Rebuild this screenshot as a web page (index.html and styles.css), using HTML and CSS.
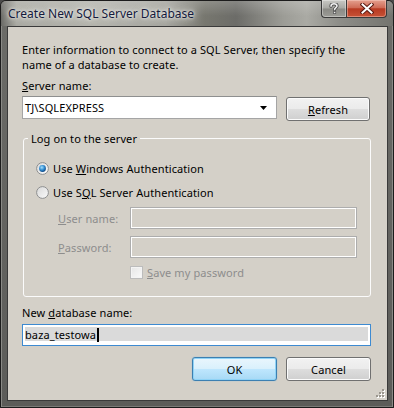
FILE: index.html
```html
<!DOCTYPE html>
<html>
<head>
<meta charset="utf-8">
<title>Create New SQL Server Database</title>
<link rel="stylesheet" href="styles.css">
</head>
<body>
<div class="window">
  <div class="titlebar">
    <span class="title">Create New SQL Server Database</span>
    <div class="caption-buttons">
      <div class="cap help">
        <svg width="10" height="11" viewBox="0 0 10 11"><path d="M2 3.2 C2 1.4 3.4 0.8 5 0.8 C6.8 0.8 8 1.7 8 3.1 C8 4.6 5.6 4.9 5.6 6.6" fill="none" stroke="#4a4a4a" stroke-width="3.2" stroke-linecap="round"/><path d="M2 3.2 C2 1.4 3.4 0.8 5 0.8 C6.8 0.8 8 1.7 8 3.1 C8 4.6 5.6 4.9 5.6 6.6" fill="none" stroke="#f0f0f0" stroke-width="1.6" stroke-linecap="round"/><rect x="4.1" y="8.2" width="3" height="2.6" fill="#4a4a4a"/><rect x="4.8" y="8.8" width="1.6" height="1.4" fill="#f0f0f0"/></svg>
      </div>
      <div class="cap close">
        <svg width="14" height="11" viewBox="0 0 14 11"><path d="M2.5 1.5 L11.5 9.5 M11.5 1.5 L2.5 9.5" stroke="#5a1a12" stroke-width="4" stroke-linecap="square"/><path d="M2.5 1.5 L11.5 9.5 M11.5 1.5 L2.5 9.5" stroke="#ffffff" stroke-width="2" stroke-linecap="square"/></svg>
      </div>
    </div>
  </div>
  <div class="client">
    <p class="intro">Enter information to connect to a SQL Server, then specify the<br>name of a database to create.</p>
    <div class="label label-server"><u>S</u>erver name:</div>
    <div class="server-row">
      <div class="combo">
        <span class="value">TJ\SQLEXPRESS</span>
        <svg class="arrow" width="7" height="4" viewBox="0 0 7 4"><path d="M0 0 H7 L3.5 4 Z" fill="#000"/></svg>
      </div>
      <div class="btn btn-refresh"><u>R</u>efresh</div>
    </div>
    <fieldset class="group">
      <legend>Log on to the server</legend>
      <div class="group-body">
        <div class="radio-row">
          <svg class="radio" width="13" height="13" viewBox="0 0 13 13">
            <defs>
              <linearGradient id="rbg1" x1="0" y1="0" x2="1" y2="1"><stop offset="0" stop-color="#d8d8d8"/><stop offset="1" stop-color="#ffffff"/></linearGradient>
              <radialGradient id="rdot" cx="0.4" cy="0.35" r="0.7"><stop offset="0" stop-color="#a6e0fb"/><stop offset="0.55" stop-color="#2f8ad0"/><stop offset="1" stop-color="#0b3f78"/></radialGradient>
            </defs>
            <circle cx="6.5" cy="6.5" r="5.9" fill="url(#rbg1)" stroke="#8d8e8f" stroke-width="1"/>
            <circle cx="6.5" cy="6.5" r="3.4" fill="url(#rdot)"/>
          </svg>
          <span>Use <u>W</u>indows Authentication</span>
        </div>
        <div class="radio-row">
          <svg class="radio" width="13" height="13" viewBox="0 0 13 13">
            <defs>
              <linearGradient id="rbg2" x1="0" y1="0" x2="1" y2="1"><stop offset="0" stop-color="#d8d8d8"/><stop offset="1" stop-color="#fbfbfb"/></linearGradient>
            </defs>
            <circle cx="6.5" cy="6.5" r="5.9" fill="url(#rbg2)" stroke="#8d8e8f" stroke-width="1"/>
          </svg>
          <span>Use S<u>Q</u>L Server Authentication</span>
        </div>
        <div class="fields">
          <span class="field-label disabled"><u>U</u>ser name:</span>
          <div class="textbox textbox-disabled"></div>
          <span class="field-label disabled"><u>P</u>assword:</span>
          <div class="textbox textbox-disabled"></div>
          <span></span>
          <div class="check-row">
            <span class="checkbox"></span>
            <span class="disabled"><u>S</u>ave my password</span>
          </div>
        </div>
      </div>
    </fieldset>
    <div class="label label-db">New <u>d</u>atabase name:</div>
    <div class="textbox textbox-focused"><span>baza_testowa</span><span class="caret"></span></div>
    <div class="buttons">
      <div class="btn btn-default">OK</div>
      <div class="btn">Cancel</div>
    </div>
    <svg class="grip" width="9" height="9" viewBox="0 0 9 9">
      <g fill="#ffffff"><rect x="7" y="1" width="2" height="2"/><rect x="4" y="4" width="2" height="2"/><rect x="7" y="4" width="2" height="2"/><rect x="1" y="7" width="2" height="2"/><rect x="4" y="7" width="2" height="2"/><rect x="7" y="7" width="2" height="2"/></g>
      <g fill="#9a968e"><rect x="6" y="0" width="2" height="2"/><rect x="3" y="3" width="2" height="2"/><rect x="6" y="3" width="2" height="2"/><rect x="0" y="6" width="2" height="2"/><rect x="3" y="6" width="2" height="2"/><rect x="6" y="6" width="2" height="2"/></g>
    </svg>
  </div>
</div>
</body>
</html>
```

FILE: styles.css
```css
* { box-sizing: border-box; }

html, body {
  margin: 0;
  padding: 0;
}

body {
  width: 394px;
  height: 408px;
  overflow: hidden;
  background: #4a4a4a;
  font-family: "Noto Sans", "Open Sans", sans-serif;
  font-size: 11px;
  letter-spacing: 0.1px;
  color: #000;
}

.window {
  width: 394px;
  height: 408px;
  border: 1px solid #1c1c1c;
  border-radius: 6px 6px 0 0;
  padding: 0 5px 6px 6px;
  display: flex;
  flex-direction: column;
  background: linear-gradient(to bottom, #6c6c68 0%, #5c5c59 100%);
  box-shadow: inset 1px 0 0 #8a8a86, inset -1px 0 0 #8a8a86, inset 0 -1px 0 #7a7a76;
}

.titlebar {
  height: 25px;
  margin: 0 -5px 0 -6px;
  padding: 0 6px 0 7px;
  display: flex;
  justify-content: space-between;
  align-items: flex-start;
  border-radius: 5px 5px 0 0;
  background:
    linear-gradient(to bottom, rgba(255,255,255,0.18) 0%, rgba(255,255,255,0) 60%),
    linear-gradient(to right, #6a6a66 0%, #a9a9a2 4%, #b3b3ac 25%, #a4a49e 42%, #77776f 52%, #6c6c68 60%, #9c9c96 72%, #aaaaa4 78%, #8e8e89 86%, #74746f 100%);
}

.title {
  line-height: 25px;
  font-size: 12px;
  letter-spacing: 0;
  color: #141a3c;
  text-shadow: 0 0 6px #e8e8e2, 0 0 10px #e0e0da, 0 0 3px #ffffff;
}

.caption-buttons {
  display: flex;
  height: 18px;
  margin-top: -1px;
}

.cap {
  height: 18px;
  display: flex;
  align-items: center;
  justify-content: center;
  border: 1px solid #3a3a3a;
  border-top: none;
}

.help {
  width: 25px;
  border-radius: 0 0 0 4px;
  border-right: none;
  background: linear-gradient(to bottom, #c8c8c4 0%, #a8a8a3 48%, #8a8a85 52%, #9c9c97 100%);
  box-shadow: inset 0 0 0 1px rgba(255,255,255,0.35);
}

.close {
  width: 41px;
  border-radius: 0 0 4px 0;
  background: linear-gradient(to bottom, #e4a08f 0%, #cf6c57 45%, #b83a22 52%, #c75236 100%);
  box-shadow: inset 0 0 0 1px rgba(255,220,210,0.4);
}

.client {
  position: relative;
  flex: 1;
  border: 1px solid #3a3a3a;
  background: #d4d0c8;
  padding: 15px 16px 17px 14px;
  display: flex;
  flex-direction: column;
}

.intro {
  margin: 0;
  line-height: 15px;
}

.label {
  line-height: 15px;
}

.label-server {
  margin-top: 6px;
}

.server-row {
  margin-top: 3px;
  display: flex;
  align-items: flex-start;
  gap: 9px;
}

.combo {
  width: 255px;
  height: 23px;
  background: #fff;
  border: 1px solid #a5a5a5;
  border-top-color: #8e8f8f;
  display: flex;
  align-items: center;
  justify-content: space-between;
  padding: 0 9px 0 2px;
}

.combo .arrow {
  display: block;
}

.btn {
  width: 85px;
  height: 24px;
  border: 1px solid #707070;
  border-radius: 3px;
  display: flex;
  align-items: center;
  justify-content: center;
  background: linear-gradient(to bottom, #f2f2f2 0%, #ebebeb 48%, #dddddd 52%, #cfcfcf 100%);
  box-shadow: inset 0 0 0 1px #fbfbfb;
}

.btn-refresh {
  width: 84px;
  margin-top: 1px;
}

.btn-default {
  border-color: #3c7fb1;
  background: linear-gradient(to bottom, #eaf6fd 0%, #d9f0fc 48%, #bee6fd 52%, #a7d9f5 100%);
  box-shadow: inset 0 0 0 1px #8fd3f6, 0 0 1px #5ab4ea;
}

.group {
  margin: 10px 0 0 1px;
  padding: 0;
  border: 1px solid #fbfbfb;
  border-radius: 3px;
  min-width: 0;
}

.group legend {
  margin-left: 4px;
  padding: 0 3px;
  line-height: 15px;
}

.group-body {
  padding: 15px 12px 18px 12px;
}

.radio-row {
  height: 15px;
  display: flex;
  align-items: center;
  gap: 4px;
  line-height: 15px;
}

.radio-row + .radio-row {
  margin-top: 9px;
}

.radio {
  display: block;
}

.fields {
  margin: 7px 0 0 22px;
  display: grid;
  grid-template-columns: 72px 227px;
  grid-template-rows: 22px 22px 13px;
  row-gap: 7px;
  align-items: center;
}

.fields .check-row {
  margin-top: 1px;
}

.disabled {
  color: #8d8d8d;
}

.textbox {
  height: 22px;
  border: 1px solid #abadb3;
}

.textbox-disabled {
  background: #d4d0c8;
  border-color: #adadad;
  box-shadow: inset 0 0 0 1px #ffffff;
}

.check-row {
  display: flex;
  align-items: center;
  gap: 4px;
  height: 13px;
  line-height: 15px;
}

.checkbox {
  width: 13px;
  height: 13px;
  border: 1px solid #bcbcbc;
  background: linear-gradient(135deg, #e6e6e6 0%, #fafafa 100%);
  box-shadow: inset 0 0 0 1px #f4f4f4;
}

.label-db {
  margin-top: 8px;
}

.textbox-focused {
  margin-top: 4px;
  border-color: #3d8ad1;
  background: #dadada;
  box-shadow: inset 0 0 0 2px #ffffff, inset 0 -4px 0 #ffffff;
  display: flex;
  align-items: center;
  padding: 0 0 1px 2px;
}

.caret {
  width: 2px;
  height: 14px;
  background: #000;
  margin-left: 1px;
}

.buttons {
  margin-top: 11px;
  display: flex;
  justify-content: flex-end;
  gap: 9px;
}

.grip {
  position: absolute;
  right: 2px;
  bottom: 2px;
}
```
